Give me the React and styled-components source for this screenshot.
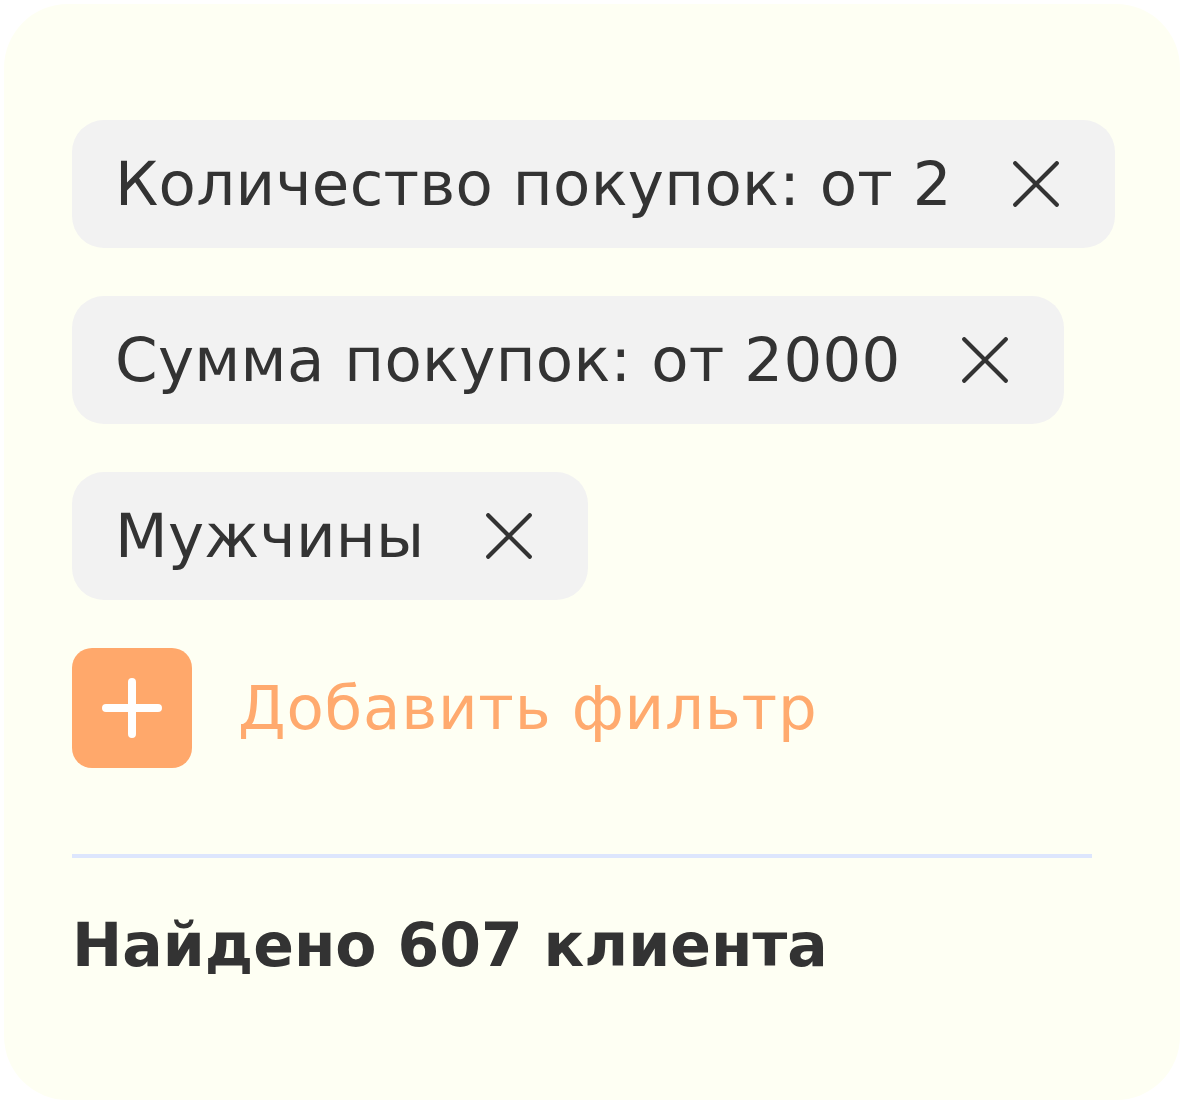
import React from "react";
import styled, { createGlobalStyle } from "styled-components";

const GlobalStyle = createGlobalStyle`
  html, body { margin: 0; padding: 0; background: #ffffff; }
  body { font-family: "DejaVu Sans", "Noto Sans", sans-serif; color: #333333; }
`;

const Page = styled.div`
  padding: 4px;
  width: 1184px;
  height: 1104px;
  box-sizing: border-box;
`;

const Card = styled.section`
  width: 1176px;
  height: 1096px;
  box-sizing: border-box;
  border-radius: 64px;
  background: #fefff3;
  padding: 116px 88px 0 68px;
  display: flex;
  flex-direction: column;
  align-items: flex-start;
`;

const ChipList = styled.div`
  display: flex;
  flex-direction: column;
  align-items: flex-start;
  gap: 48px;
`;

const Chip = styled.div`
  height: 128px;
  box-sizing: border-box;
  display: flex;
  align-items: center;
  gap: 61px;
  padding: 0 56px 0 43px;
  border-radius: 32px;
  background: #f2f2f2;
  white-space: nowrap;
`;

const ChipLabel = styled.span`
  font-size: 61px;
  font-weight: 400;
  letter-spacing: 0.3px;
  color: #333333;
  line-height: 1.16;
`;

const RemoveButton = styled.button`
  border: 0;
  padding: 0;
  margin: 0;
  background: none;
  width: 46px;
  height: 46px;
  display: flex;
  cursor: pointer;
  color: #333333;
`;

const AddRow = styled.div`
  margin-top: 48px;
  display: flex;
  align-items: center;
  gap: 46px;
`;

const AddButton = styled.button`
  width: 120px;
  height: 120px;
  border: 0;
  padding: 0;
  border-radius: 20px;
  background: #ffa86b;
  display: flex;
  align-items: center;
  justify-content: center;
  cursor: pointer;
`;

const AddLabel = styled.span`
  font-size: 61px;
  letter-spacing: 0.8px;
  color: #ffaa6e;
  line-height: 1.16;
`;

const Divider = styled.hr`
  margin: 86px 0 0;
  width: 1020px;
  height: 4px;
  border: 0;
  background: #dde6fd;
`;

const Result = styled.h2`
  margin: 53px 0 0 0;
  font-size: 60px;
  font-weight: 700;
  color: #333333;
  line-height: 1.16;
  white-space: nowrap;
`;

const CloseIcon = () => (
  <svg width="46" height="46" viewBox="0 0 46 46" fill="none">
    <path d="M2.2 2.2 L43.8 43.8 M43.8 2.2 L2.2 43.8" stroke="currentColor" strokeWidth="4.2" strokeLinecap="round" />
  </svg>
);

const PlusIcon = () => (
  <svg width="60" height="60" viewBox="0 0 60 60" fill="none">
    <path d="M30 4 V56 M4 30 H56" stroke="#ffffff" strokeWidth="8" strokeLinecap="round" />
  </svg>
);

const filters = [
  "Количество покупок: от 2",
  "Сумма покупок: от 2000",
  "Мужчины",
];

export default function App() {
  return (
    <>
      <GlobalStyle />
      <Page>
        <Card>
          <ChipList>
            {filters.map((f) => (
              <Chip key={f}>
                <ChipLabel>{f}</ChipLabel>
                <RemoveButton aria-label="Удалить фильтр">
                  <CloseIcon />
                </RemoveButton>
              </Chip>
            ))}
          </ChipList>
          <AddRow>
            <AddButton aria-label="Добавить фильтр">
              <PlusIcon />
            </AddButton>
            <AddLabel>Добавить фильтр</AddLabel>
          </AddRow>
          <Divider />
          <Result>Найдено 607 клиента</Result>
        </Card>
      </Page>
    </>
  );
}
